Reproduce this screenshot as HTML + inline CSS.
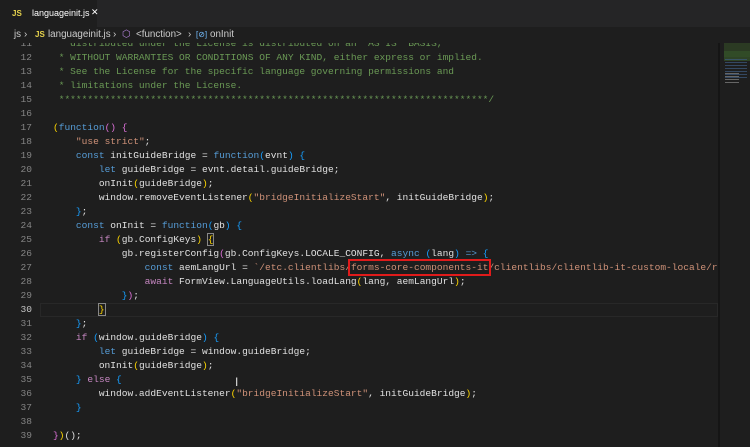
<!DOCTYPE html>
<html><head><style>
body{margin:0;width:750px;height:447px;overflow:hidden;background:#1e1e1e;font-family:"Liberation Sans",sans-serif;position:relative}
.tabs{position:absolute;top:0;left:0;width:750px;height:27px;background:#252526}
.tab{position:absolute;left:0;top:0;width:97px;height:27px;background:#1e1e1e;color:#fff;font-size:9.6px}
.crumb{position:absolute;top:27px;left:0;width:750px;height:16px;background:#1e1e1e;color:#ccc;font-size:9.8px;line-height:16px}
.js{color:#e8d44d;font-weight:bold;font-size:8px}
.ed{position:absolute;top:43px;left:0;width:718px;height:404px;overflow:hidden}
pre{margin:0;font-family:"Liberation Mono",monospace;font-size:9.55px;line-height:14px;color:#e0e0e0}
.gut{position:absolute;top:-6px;left:0;width:32px;text-align:right;color:#858585}
.code{position:absolute;top:-6px;left:53px}
.c{color:#6a9955}.k{color:#569cd6}.p{color:#c586c0}.s{color:#ce9178}.y{color:#ffd700}.m{color:#da70d6}.b{color:#179fff}
.mini{position:absolute;left:718px;top:43px;width:32px;height:404px;background:#1e1e1e;border-left:2px solid #151515}
</style></head><body>
<div class="tabs"><div class="tab"><span class="js" style="position:absolute;left:12px;top:9px">JS</span><span style="position:absolute;left:32px;top:8px;font-size:9px">languageinit.js</span><span style="position:absolute;left:91px;top:7px;font-size:9px">✕</span></div></div>
<div class="crumb"><span style="position:absolute;left:14px">js</span><span style="position:absolute;left:24px">›</span><span class="js" style="position:absolute;left:35px">JS</span><span style="position:absolute;left:48px">languageinit.js</span><span style="position:absolute;left:113px">›</span><span style="position:absolute;left:122px;color:#b180d7">⬡</span><span style="position:absolute;left:136px">&lt;function&gt;</span><span style="position:absolute;left:188px">›</span><span style="position:absolute;left:196px;color:#75beff;font-size:8px">[⊘]</span><span style="position:absolute;left:210px">onInit</span></div>
<div class="ed">
<div style="position:absolute;left:40px;top:260px;width:678px;height:14px;border:1px solid #282828;box-sizing:border-box"></div>
<pre class="gut">11
12
13
14
15
16
17
18
19
20
21
22
23
24
25
26
27
28
29
<span style="color:#c6c6c6">30</span>
31
32
33
34
35
36
37
38
39</pre>
<pre class="code"><span class="c"> * distributed under the License is distributed on an "AS IS" BASIS,
 * WITHOUT WARRANTIES OR CONDITIONS OF ANY KIND, either express or implied.
 * See the License for the specific language governing permissions and
 * limitations under the License.
 ***************************************************************************/</span>

<span class="y">(</span><span class="k">function</span><span class="m">()</span> <span class="m">{</span>
    <span class="s">"use strict"</span>;
    <span class="k">const</span> initGuideBridge = <span class="k">function</span><span class="b">(</span>evnt<span class="b">)</span> <span class="b">{</span>
        <span class="k">let</span> guideBridge = evnt.detail.guideBridge;
        onInit<span class="y">(</span>guideBridge<span class="y">)</span>;
        window.removeEventListener<span class="y">(</span><span class="s">"bridgeInitializeStart"</span>, initGuideBridge<span class="y">)</span>;
    <span class="b">}</span>;
    <span class="k">const</span> onInit = <span class="k">function</span><span class="b">(</span>gb<span class="b">)</span> <span class="b">{</span>
        <span class="p">if</span> <span class="y">(</span>gb.ConfigKeys<span class="y">)</span> <span class="y" style="outline:1px solid #888">{</span>
            gb.registerConfig<span class="m">(</span>gb.ConfigKeys.LOCALE_CONFIG, <span class="k">async</span> <span class="b">(</span>lang<span class="b">)</span> <span class="k">=&gt;</span> <span class="b">{</span>
                <span class="k">const</span> aemLangUrl = <span class="s">`/etc.clientlibs/<span style="outline:2px solid #e01b1b;outline-offset:1px">forms-core-components-it</span>/clientlibs/clientlib-it-custom-locale/re</span>
                <span class="p">await</span> FormView.LanguageUtils.loadLang<span class="y">(</span>lang, aemLangUrl<span class="y">)</span>;
            <span class="b">}</span><span class="m">)</span>;
        <span class="y" style="outline:1px solid #888">}</span>
    <span class="b">}</span>;
    <span class="p">if</span> <span class="b">(</span>window.guideBridge<span class="b">)</span> <span class="b">{</span>
        <span class="k">let</span> guideBridge = window.guideBridge;
        onInit<span class="y">(</span>guideBridge<span class="y">)</span>;
    <span class="b">}</span> <span class="p">else</span> <span class="b">{</span>
        window.addEventListener<span class="y">(</span><span class="s">"bridgeInitializeStart"</span>, initGuideBridge<span class="y">)</span>;
    <span class="b">}</span>

<span class="m">}</span><span class="y">)</span>();</pre>
<div style="position:absolute;left:235px;top:332px;color:#ddd;font-size:12px">I</div>
</div>
<div class="mini">
<div style="position:absolute;left:4px;top:0;width:28px;height:14px;background:#2b3a23"></div>
<div style="position:absolute;left:4px;top:8px;width:26px;height:10px;background:#34522a;opacity:.7"></div>
<div style="position:absolute;left:5px;top:16px;width:22px;height:20px;background:repeating-linear-gradient(#3d5a80 0 1px,transparent 1px 3px);opacity:.7"></div>
<div style="position:absolute;left:5px;top:30px;width:14px;height:10px;background:repeating-linear-gradient(#666 0 1px,transparent 1px 3px)"></div>
</div>
</body></html>
